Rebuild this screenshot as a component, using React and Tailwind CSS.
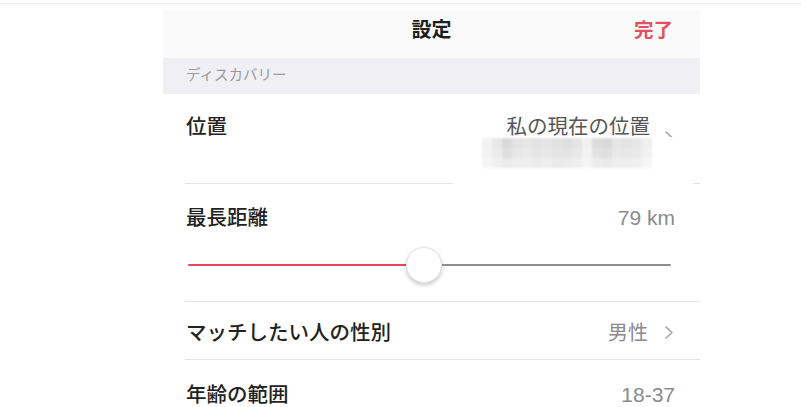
import React from "react";

const mosaic = [
  ["bg-[#f2f2f2]","bg-[#e8e8e8]","bg-[#d9d9d9]","bg-[#e3e3e3]","bg-[#e6e6e6]","bg-[#e2e2e2]","bg-[#e5e5e5]","bg-[#e2e2e2]","bg-[#dfdfdf]","bg-[#e4e4e4]","bg-[#f1f1f1]","bg-[#dbdbdb]","bg-[#d9d9d9]","bg-[#e6e6e6]","bg-[#e3e3e3]","bg-[#e7e7e7]","bg-[#efefef]"],
  ["bg-[#f3f3f3]","bg-[#ebebeb]","bg-[#dfdfdf]","bg-[#e8e8e8]","bg-[#eaeaea]","bg-[#e5e5e5]","bg-[#e8e8e8]","bg-[#e4e4e4]","bg-[#e3e3e3]","bg-[#e8e8e8]","bg-[#f2f2f2]","bg-[#e2e2e2]","bg-[#dfdfdf]","bg-[#e8e8e8]","bg-[#e7e7e7]","bg-[#eaeaea]","bg-[#f1f1f1]"],
  ["bg-[#f6f6f6]","bg-[#f0f0f0]","bg-[#ebebeb]","bg-[#eeeeee]","bg-[#efefef]","bg-[#ececec]","bg-[#eeeeee]","bg-[#eaeaea]","bg-[#ebebeb]","bg-[#eeeeee]","bg-[#f5f5f5]","bg-[#ececec]","bg-[#eaeaea]","bg-[#efefef]","bg-[#eeeeee]","bg-[#efefef]","bg-[#f5f5f5]"],
];

function Chevron({ className = "" }) {
  return (
    <svg width="8" height="13" viewBox="0 0 8 13" className={className}>
      <polyline points="1,1 7,6.5 1,12" fill="none" stroke="#a3a3a6" strokeWidth="1.6" strokeLinecap="round" strokeLinejoin="round" />
    </svg>
  );
}

export default function App() {
  return (
    <div className="w-[801px] h-[407px] bg-white overflow-hidden font-['Liberation_Sans','Noto_Sans_CJK_JP',sans-serif]">
      <div className="h-[3px]" />
      <div className="h-px bg-[#ececec]" />
      <div className="ml-[163px] w-[537px] mt-[6px]">
        {/* nav */}
        <div className="h-[48px] bg-[#fafafa] flex items-center justify-center relative pb-[8px]">
          <span className="text-[20px] leading-[28px] font-bold text-[#1e1e1e]">設定</span>
          <span className="absolute right-[27px] top-[6px] text-[19.5px] leading-[28px] font-bold text-[#e4505f]">完了</span>
        </div>
        {/* section header */}
        <div className="h-[36px] bg-[#efeff4] flex items-center pl-[23px]">
          <span className="text-[14.5px] text-[#9a9a9f]">ディスカバリー</span>
        </div>

        {/* 位置 */}
        <div className="relative">
          <div className="ml-[22px] h-[90px] border-b border-[#e4e4e4] pt-[20px] pl-[1px] pr-[27px] flex justify-between items-start">
            <span className="text-[20.5px] leading-[26px] font-medium text-[#222222]">位置</span>
            <div className="flex items-start gap-[15px]">
              <span className="text-[20.5px] leading-[26px] text-[#555555]">私の現在の位置</span>
              <Chevron className="mt-[17px]" />
            </div>
          </div>
          <div className="absolute left-[290px] top-[43px] w-[240px] h-[53px] bg-white z-10">
            <div className="ml-[29px] mt-[1px] w-[170px] grid grid-cols-[repeat(17,10px)] blur-[1px]">
              {mosaic.map((row, r) =>
                row.map((c, i) => <div key={r + "-" + i} className={"h-[10px] " + c} />)
              )}
            </div>
          </div>
        </div>

        {/* 最長距離 */}
        <div className="ml-[22px] border-b border-[#e4e4e4] pt-[21px] pb-[18px]">
          <div className="flex justify-between items-center pl-[1px] pr-[25px]">
            <span className="text-[20.5px] leading-[26px] font-medium text-[#222222]">最長距離</span>
            <span className="text-[21px] leading-[26px] text-[#8a8a8e]">79 km</span>
          </div>
          <div className="mt-[16px] ml-[3px] mr-[29px] h-[36px] flex items-center">
            <div className="w-[218px] h-[2px] bg-[#e4485f] rounded-l-full" />
            <div className="w-[36px] h-[36px] rounded-full bg-white border border-[#e2e2e2] shadow-[0_2px_4px_rgba(0,0,0,0.22)] shrink-0" />
            <div className="flex-1 h-[2px] bg-[#8e8e90] rounded-r-full" />
          </div>
        </div>

        {/* 性別 */}
        <div className="ml-[22px] h-[58px] border-b border-[#e4e4e4] pt-[4px] pl-[1px] pr-[27px] flex justify-between items-center">
          <span className="text-[20.5px] leading-[26px] font-medium text-[#222222]">マッチしたい人の性別</span>
          <div className="flex items-center gap-[17px]">
            <span className="text-[20px] leading-[26px] text-[#8a8a8e]">男性</span>
            <Chevron />
          </div>
        </div>

        {/* 年齢 */}
        <div className="ml-[22px] pt-[22px] pl-[1px] pr-[25px] flex justify-between items-center">
          <span className="text-[20.5px] leading-[26px] font-medium text-[#222222]">年齢の範囲</span>
          <span className="text-[21px] leading-[26px] text-[#8a8a8e]">18-37</span>
        </div>
      </div>
    </div>
  );
}
